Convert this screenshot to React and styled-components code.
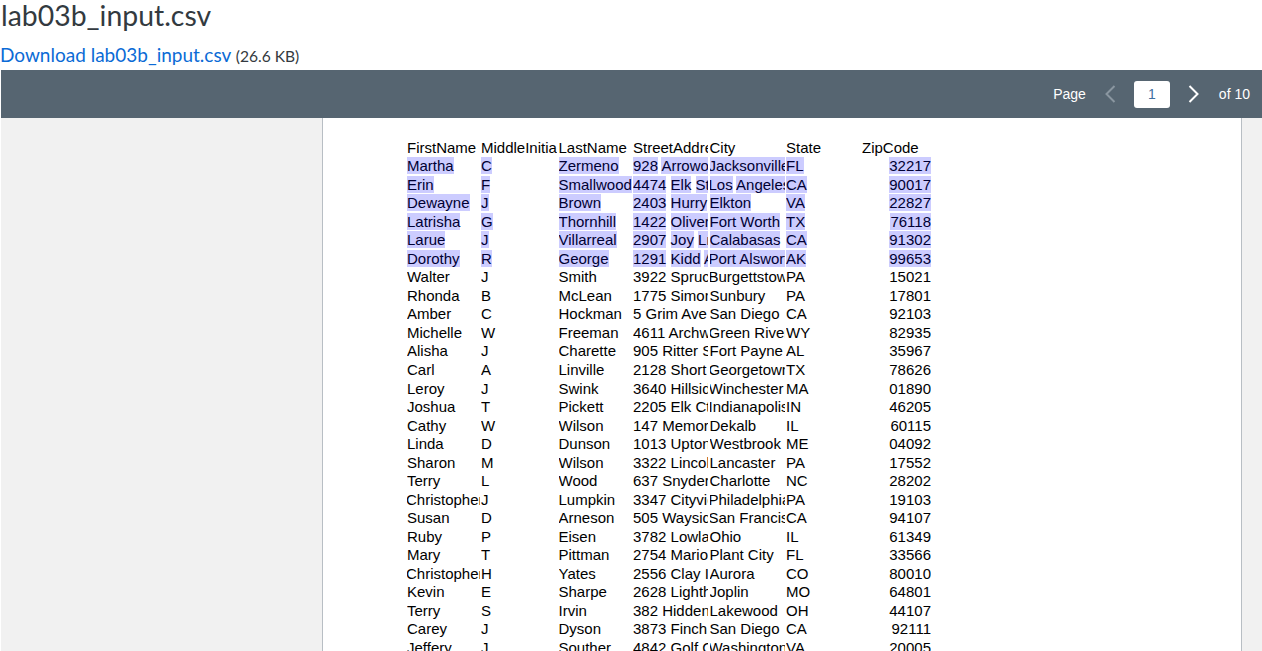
import React from 'react';
import styled, { createGlobalStyle } from 'styled-components';

const columns = ['FirstName', 'MiddleInitial', 'LastName', 'StreetAddress', 'City', 'State', 'ZipCode'];

const rows = [
  ['Martha', 'C', 'Zermeno', '928 Arrowood Dr', 'Jacksonville', 'FL', '32217'],
  ['Erin', 'F', 'Smallwood', '4474 Elk St', 'Los Angeles', 'CA', '90017'],
  ['Dewayne', 'J', 'Brown', '2403 Hurry St', 'Elkton', 'VA', '22827'],
  ['Latrisha', 'G', 'Thornhill', '1422 Oliver St', 'Fort Worth', 'TX', '76118'],
  ['Larue', 'J', 'Villarreal', '2907 Joy Ln', 'Calabasas', 'CA', '91302'],
  ['Dorothy', 'R', 'George', '1291 Kidd Ave', 'Port Alsworth', 'AK', '99653'],
  ['Walter', 'J', 'Smith', '3922 Spruce Dr', 'Burgettstown', 'PA', '15021'],
  ['Rhonda', 'B', 'McLean', '1775 Simons Rd', 'Sunbury', 'PA', '17801'],
  ['Amber', 'C', 'Hockman', '5 Grim Ave', 'San Diego', 'CA', '92103'],
  ['Michelle', 'W', 'Freeman', '4611 Archwood', 'Green River', 'WY', '82935'],
  ['Alisha', 'J', 'Charette', '905 Ritter St', 'Fort Payne', 'AL', '35967'],
  ['Carl', 'A', 'Linville', '2128 Short St', 'Georgetown', 'TX', '78626'],
  ['Leroy', 'J', 'Swink', '3640 Hillside', 'Winchester', 'MA', '01890'],
  ['Joshua', 'T', 'Pickett', '2205 Elk Ct', 'Indianapolis', 'IN', '46205'],
  ['Cathy', 'W', 'Wilson', '147 Memorial', 'Dekalb', 'IL', '60115'],
  ['Linda', 'D', 'Dunson', '1013 Upton Rd', 'Westbrook', 'ME', '04092'],
  ['Sharon', 'M', 'Wilson', '3322 Lincoln', 'Lancaster', 'PA', '17552'],
  ['Terry', 'L', 'Wood', '637 Snyder Rd', 'Charlotte', 'NC', '28202'],
  ['Christopher', 'J', 'Lumpkin', '3347 Cityview', 'Philadelphia', 'PA', '19103'],
  ['Susan', 'D', 'Arneson', '505 Wayside', 'San Francisco', 'CA', '94107'],
  ['Ruby', 'P', 'Eisen', '3782 Lowland', 'Ohio', 'IL', '61349'],
  ['Mary', 'T', 'Pittman', '2754 Marion', 'Plant City', 'FL', '33566'],
  ['Christopher', 'H', 'Yates', '2556 Clay Is', 'Aurora', 'CO', '80010'],
  ['Kevin', 'E', 'Sharpe', '2628 Lighthouse', 'Joplin', 'MO', '64801'],
  ['Terry', 'S', 'Irvin', '382 Hidden Ln', 'Lakewood', 'OH', '44107'],
  ['Carey', 'J', 'Dyson', '3873 Finch St', 'San Diego', 'CA', '92111'],
  ['Jeffery', 'J', 'Souther', '4842 Golf Ct', 'Washington', 'VA', '20005'],
];

const HIGHLIGHTED_ROWS = 6;

// long values sit a pixel further left in the pdf, they overflow their cell
const OVERFLOWING = new Set([
  'Christopher', 'Jacksonville', 'Los Angeles', 'Port Alsworth', 'Burgettstown', 'Green River',
  'Georgetown', 'Winchester', 'Indianapolis', 'Philadelphia', 'San Francisco', 'Washington',
]);

// these keep the highlight running across their space
const UNBROKEN = new Set(['Fort Worth', 'Port Alsworth']);

const words = (value) => (UNBROKEN.has(value) ? [value] : value.split(' '));

function App() {
  return (
    <>
      <GlobalStyle />
      <Title>lab03b_input.csv</Title>
      <Download>
        <a href="#">Download lab03b_input.csv</a> <small>(26.6 KB)</small>
      </Download>
      <Toolbar>
        <PageLabel>Page</PageLabel>
        <NavButton disabled aria-label="Previous page">
          <svg width="12" height="18" viewBox="0 0 12 18"><path d="M10.500 1 2.500 9l8 8" /></svg>
        </NavButton>
        <PageInput defaultValue="1" aria-label="Page number" />
        <NavButton aria-label="Next page">
          <svg width="12" height="18" viewBox="0 0 12 18"><path d="M1.500 1l8 8-8 8" /></svg>
        </NavButton>
        <PageCount>of 10</PageCount>
      </Toolbar>
      <Viewer>
        <Sheet>
          <Row>
            {columns.map((name) => (
              <Cell key={name}>{name}</Cell>
            ))}
          </Row>
          {rows.map((row, i) => (
            <Row key={i}>
              {row.map((value, c) => (
                <Cell key={c} $right={c === 6} $overflowing={OVERFLOWING.has(value)}>
                  {i < HIGHLIGHTED_ROWS
                    ? words(value).map((word, w) => (
                        <React.Fragment key={w}>
                          {w > 0 && ' '}
                          <Mark>{word}</Mark>
                        </React.Fragment>
                      ))
                    : value}
                </Cell>
              ))}
            </Row>
          ))}
        </Sheet>
      </Viewer>
    </>
  );
}

const GlobalStyle = createGlobalStyle`
  html, body {
    margin: 0;
    height: 100%;
    overflow: hidden;
    background: #fff;
  }
  body {
    font-family: Lato, sans-serif;
    color: #343a40;
  }
`;

const Title = styled.h1`
  margin: 0;
  padding-left: 1px;
  height: 40px;
  font-size: 28.400px;
  line-height: 30px;
  font-weight: 400;
  color: #333a40;
`;

const Download = styled.p`
  margin: 0;
  height: 30px;
  font-size: 19px;
  line-height: 30px;

  a {
    color: #0b6bd6;
    text-decoration: none;
  }

  small {
    font-size: 15.600px;
    color: #343a40;
  }
`;

const Toolbar = styled.div`
  display: flex;
  align-items: center;
  justify-content: flex-end;
  height: 48px;
  margin-left: 1px;
  padding-right: 12px;
  background: #566571;
  font-family: "Liberation Sans", Arial, sans-serif;
  font-size: 14px;
  color: #fff;
`;

const PageLabel = styled.span`
  margin-right: 18px;
`;

const PageCount = styled.span`
  margin-left: 19px;
`;

const NavButton = styled.button`
  display: flex;
  align-items: center;
  justify-content: center;
  width: 12px;
  height: 18px;
  padding: 0;
  border: 0;
  background: none;

  svg path {
    fill: none;
    stroke: ${(p) => (p.disabled ? '#8a96a0' : '#fff')};
    stroke-width: 2;
  }
`;

const PageInput = styled.input`
  width: 36px;
  height: 27px;
  margin: 0 18px;
  padding: 0;
  box-sizing: border-box;
  border: 0;
  border-radius: 3px;
  background: #fff;
  text-align: center;
  font-family: "Liberation Sans", Arial, sans-serif;
  font-size: 14px;
  color: #3f6f9f;
`;

const Viewer = styled.div`
  display: flex;
  justify-content: flex-start;
  height: 533px;
  overflow: hidden;
  margin-left: 1px;
  padding-left: 321px;
  background: #f1f1f1;
`;

const Sheet = styled.div`
  width: 920px;
  box-sizing: border-box;
  padding: 20.650px 0 0 84px;
  border-left: 1px solid #b8bec4;
  border-right: 1px solid #b8bec4;
  background: #fff;
  font-family: "Liberation Sans", Arial, sans-serif;
  font-size: 15px;
  color: #000;
`;

const Row = styled.div`
  display: grid;
  grid-template-columns: 72.500px 76px 73px 75px 75px 74.500px 69px;
  column-gap: 1.500px;
  height: 18.540px;
  line-height: 18.540px;
`;

const Cell = styled.div`
  overflow: hidden;
  white-space: nowrap;
  text-align: ${(p) => (p.$right ? 'right' : 'left')};
  text-indent: ${(p) => (p.$overflowing ? '-1px' : '0')};
`;

const Mark = styled.span`
  background: #ccccff;
  color: #000033;
`;

export default App;
